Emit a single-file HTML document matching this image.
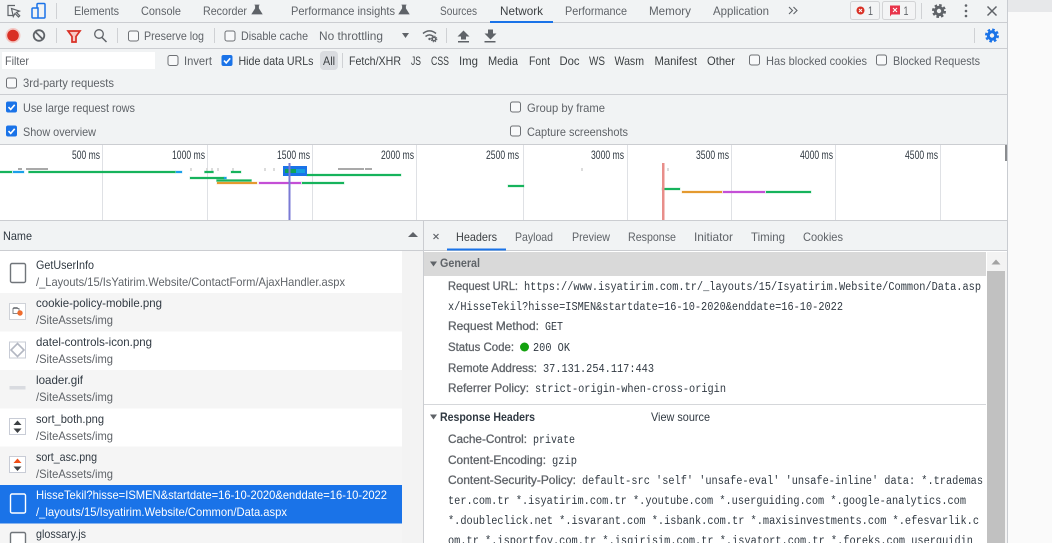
<!DOCTYPE html>
<html><head><meta charset="utf-8"><title>DevTools Network</title>
<style>
html,body{margin:0;padding:0;width:1052px;height:543px;overflow:hidden;background:#fafafa}
svg{display:block}
text{font-family:"Liberation Sans",sans-serif;font-size:12px;fill:#5f6368;white-space:pre}
.d{fill:#3c4043}
.n{fill:#303942}
.l{stroke:#5f6368;stroke-width:.3px}
.m{font-family:"Liberation Mono",monospace;font-size:11.5px;fill:#303942}
.b{font-weight:bold}
</style></head><body>
<svg width="1052" height="543" viewBox="0 0 1052 543" xmlns="http://www.w3.org/2000/svg">
<defs>
<g id="cb"><rect x=".5" y=".5" width="10" height="10" rx="2" fill="#f8f9fa" stroke="#6e7175"/></g>
<g id="cc"><rect x="0" y="0" width="11" height="11" rx="2" fill="#1a73e8"/><path d="M2.500 5.600l2.200 2.300 4-4.600" fill="none" stroke="#fff" stroke-width="1.600"/></g>
<g id="fl"><path d="M-1.500 -4.500h3v3l3.500 5.500h-10l3.500-5.500z M-2.500 -5h5" fill="#5f6368" stroke="#5f6368" stroke-width=".8"/></g>
<g id="gr"><circle r="3.700" fill="none" stroke="currentColor" stroke-width="3"/><circle r="6" fill="none" stroke="currentColor" stroke-width="2" stroke-dasharray="2.600 2.110"/></g>
</defs>

<rect width="1052" height="543" fill="#fafafa"/>
<rect x="1008" y="0" width="44" height="12" fill="#e7e8ea"/>
<rect x="0" y="0" width="1007" height="145" fill="#f1f3f4"/>
<rect x="1007" y="0" width="1" height="543" fill="#c9ccd1"/>

<!-- tab bar -->
<rect y="22" width="1007" height="1" fill="#cbcdd1"/>
<path d="M15 5.500H8v10h5M11.500 8.500l1.800 8 1.700-3 3.500 3.500 1.200-1.200-3.300-3.400 3-1.300z" fill="none" stroke="#5f6368" stroke-width="1.200"/>
<path d="M37 8V4.500a1 1 0 0 1 1-1h6a1 1 0 0 1 1 1v12.500a1 1 0 0 1-1 1h-11a1 1 0 0 1-1-1V9a1 1 0 0 1 1-1h5v10" fill="none" stroke="#1a73e8" stroke-width="1.500"/>
<rect x="56" y="3" width="1" height="16" fill="#cfd1d4"/>
<text x="74" y="15" textLength="45" lengthAdjust="spacingAndGlyphs">Elements</text>
<text x="141" y="15" textLength="40" lengthAdjust="spacingAndGlyphs">Console</text>
<text x="203" y="15" textLength="44" lengthAdjust="spacingAndGlyphs">Recorder</text>
<use href="#fl" x="257" y="10"/>
<text x="291" y="15" textLength="104" lengthAdjust="spacingAndGlyphs">Performance insights</text>
<use href="#fl" x="404" y="10"/>
<text x="440" y="15" textLength="37" lengthAdjust="spacingAndGlyphs">Sources</text>
<text class="d" x="500" y="15" textLength="43" lengthAdjust="spacingAndGlyphs">Network</text>
<rect x="490" y="21" width="63" height="2" fill="#1a73e8"/>
<text x="565" y="15" textLength="62" lengthAdjust="spacingAndGlyphs">Performance</text>
<text x="649" y="15" textLength="42" lengthAdjust="spacingAndGlyphs">Memory</text>
<text x="713" y="15" textLength="56" lengthAdjust="spacingAndGlyphs">Application</text>
<path d="M789 7l3.500 3.500-3.500 3.500M793.500 7l3.500 3.500-3.500 3.500" fill="none" stroke="#5f6368" stroke-width="1.100"/>

<rect x="850.500" y="1.500" width="29" height="18" rx="2" fill="#f3f4f5" stroke="#d3d4d6"/>
<circle cx="860.500" cy="10.500" r="4" fill="#d93025"/>
<path d="M859 9l3 3m0-3l-3 3" stroke="#fff" stroke-width="1"/>
<text x="868" y="15" textLength="5" lengthAdjust="spacingAndGlyphs">1</text>
<rect x="882.500" y="1.500" width="33" height="18" rx="2" fill="#f3f4f5" stroke="#d3d4d6"/>
<path d="M890 5.500h10v9h-8.500l-1.500 2z" fill="#e8334a"/>
<path d="M893 8l4 4m0-4l-4 4" stroke="#fff" stroke-width="1"/>
<text x="903.500" y="15" textLength="5" lengthAdjust="spacingAndGlyphs">1</text>
<rect x="921" y="3" width="1" height="16" fill="#cfd1d4"/>
<use href="#gr" x="939" y="11" color="#5f6368"/>
<g fill="#5f6368"><circle cx="966" cy="5.500" r="1.300"/><circle cx="966" cy="11" r="1.300"/><circle cx="966" cy="16" r="1.300"/></g>
<path d="M987.500 6.500l9 9m0-9l-9 9" stroke="#5f6368" stroke-width="1.500"/>

<!-- toolbar -->
<rect y="48" width="1007" height="1" fill="#cbcdd1"/>
<circle cx="13" cy="35.500" r="7.500" fill="#f3c6c2"/>
<circle cx="13" cy="35.500" r="5.800" fill="#d93025"/>
<circle cx="39" cy="35.500" r="5.300" fill="none" stroke="#5f6368" stroke-width="1.800"/>
<path d="M35.500 32l7 7" stroke="#5f6368" stroke-width="1.800"/>
<rect x="56" y="28" width="1" height="15" fill="#cfd1d4"/>
<path d="M68 31h12l-4 5.500v5.500h-4v-5.500z" fill="#f7c9c5" stroke="#d93025" stroke-width="1.700"/>
<circle cx="99" cy="34" r="4.300" fill="none" stroke="#5f6368" stroke-width="1.300"/>
<path d="M102 37.500l4.500 4.500" stroke="#5f6368" stroke-width="1.500"/>
<rect x="117" y="28" width="1" height="15" fill="#cfd1d4"/>
<use href="#cb" x="128" y="30.500"/>
<text x="144" y="40" textLength="60" lengthAdjust="spacingAndGlyphs">Preserve log</text>
<rect x="214" y="28" width="1" height="15" fill="#cfd1d4"/>
<use href="#cb" x="224.500" y="30.500"/>
<text x="241" y="40" textLength="67" lengthAdjust="spacingAndGlyphs">Disable cache</text>
<text x="319" y="40" textLength="64" lengthAdjust="spacingAndGlyphs">No throttling</text>
<path d="M402 33h7l-3.500 5z" fill="#5f6368"/>
<path d="M423 33.500c4-3.500 9-3.500 13 0M425.500 36.500c2.500-2 5.500-2 8 0" fill="none" stroke="#5f6368" stroke-width="1.500"/>
<circle cx="429.500" cy="39" r="1.200" fill="#5f6368"/>
<use href="#gr" x="0" y="0" transform="translate(434 39) scale(.48)" color="#5f6368"/>
<rect x="446" y="28" width="1" height="15" fill="#cfd1d4"/>
<path d="M461 36.500v3h5v-3h3.500l-6-6-6 6zM458 41h11v1.500h-11z" fill="#5f6368"/>
<path d="M488 29.500v4h-3.500l6 6 6-6h-3.500v-4zM484.500 41h11v1.500h-11z" fill="#5f6368"/>
<rect x="974" y="28" width="1" height="15" fill="#cfd1d4"/>
<use href="#gr" x="992" y="35.500" color="#1a73e8"/>

<!-- filter row -->
<rect x="2" y="52" width="153" height="17" fill="#fff"/>
<text x="5" y="65" textLength="24" lengthAdjust="spacingAndGlyphs" fill="#70757a">Filter</text>
<use href="#cb" x="167.500" y="55"/>
<text x="184" y="65" textLength="28" lengthAdjust="spacingAndGlyphs">Invert</text>
<use href="#cc" x="221.500" y="55"/>
<text class="d" x="238.500" y="65" textLength="75" lengthAdjust="spacingAndGlyphs">Hide data URLs</text>
<rect x="320" y="51" width="18" height="19" rx="4" fill="#dadce0"/>
<text class="d" x="323" y="65" textLength="12" lengthAdjust="spacingAndGlyphs">All</text>
<rect x="342" y="53" width="1" height="15" fill="#cfd1d4"/>
<text class="d" x="349" y="65" textLength="52" lengthAdjust="spacingAndGlyphs">Fetch/XHR</text>
<text class="d" x="411" y="65" textLength="10" lengthAdjust="spacingAndGlyphs">JS</text>
<text class="d" x="431" y="65" textLength="18" lengthAdjust="spacingAndGlyphs">CSS</text>
<text class="d" x="459" y="65" textLength="19" lengthAdjust="spacingAndGlyphs">Img</text>
<text class="d" x="488" y="65" textLength="30" lengthAdjust="spacingAndGlyphs">Media</text>
<text class="d" x="529" y="65" textLength="21" lengthAdjust="spacingAndGlyphs">Font</text>
<text class="d" x="559.500" y="65" textLength="20" lengthAdjust="spacingAndGlyphs">Doc</text>
<text class="d" x="589" y="65" textLength="16" lengthAdjust="spacingAndGlyphs">WS</text>
<text class="d" x="614.500" y="65" textLength="29.500" lengthAdjust="spacingAndGlyphs">Wasm</text>
<text class="d" x="654.500" y="65" textLength="42.500" lengthAdjust="spacingAndGlyphs">Manifest</text>
<text class="d" x="707" y="65" textLength="28" lengthAdjust="spacingAndGlyphs">Other</text>
<use href="#cb" x="749" y="54.500"/>
<text x="766" y="65" textLength="101" lengthAdjust="spacingAndGlyphs">Has blocked cookies</text>
<use href="#cb" x="876" y="54.500"/>
<text x="893" y="65" textLength="87" lengthAdjust="spacingAndGlyphs">Blocked Requests</text>
<use href="#cb" x="6" y="77.500"/>
<text x="23" y="87" textLength="91" lengthAdjust="spacingAndGlyphs">3rd-party requests</text>
<rect y="94" width="1007" height="1" fill="#cbcdd1"/>

<!-- settings -->
<use href="#cc" x="6" y="101.500"/>
<text x="23" y="112" textLength="112" lengthAdjust="spacingAndGlyphs">Use large request rows</text>
<use href="#cc" x="6" y="125.500"/>
<text x="23" y="136" textLength="73" lengthAdjust="spacingAndGlyphs">Show overview</text>
<use href="#cb" x="510" y="101.500"/>
<text x="527" y="112" textLength="78" lengthAdjust="spacingAndGlyphs">Group by frame</text>
<use href="#cb" x="510" y="125.500"/>
<text x="527" y="136" textLength="101" lengthAdjust="spacingAndGlyphs">Capture screenshots</text>
<rect y="144" width="1007" height="1" fill="#cbcdd1"/>

<!-- overview -->
<rect x="0" y="145" width="1007" height="75" fill="#fff"/>
<g fill="#dfe1e5">
<rect x="102" y="145" width="1" height="75"/><rect x="207" y="145" width="1" height="75"/><rect x="312" y="145" width="1" height="75"/><rect x="416" y="145" width="1" height="75"/><rect x="523" y="145" width="1" height="75"/><rect x="627" y="145" width="1" height="75"/><rect x="731" y="145" width="1" height="75"/><rect x="835" y="145" width="1" height="75"/><rect x="940" y="145" width="1" height="75"/>
</g>
<text class="n" x="72" y="159" textLength="28" lengthAdjust="spacingAndGlyphs">500 ms</text>
<text class="n" x="172" y="159" textLength="33" lengthAdjust="spacingAndGlyphs">1000 ms</text>
<text class="n" x="277" y="159" textLength="33" lengthAdjust="spacingAndGlyphs">1500 ms</text>
<text class="n" x="381" y="159" textLength="33" lengthAdjust="spacingAndGlyphs">2000 ms</text>
<text class="n" x="486" y="159" textLength="33" lengthAdjust="spacingAndGlyphs">2500 ms</text>
<text class="n" x="591" y="159" textLength="33" lengthAdjust="spacingAndGlyphs">3000 ms</text>
<text class="n" x="696" y="159" textLength="33" lengthAdjust="spacingAndGlyphs">3500 ms</text>
<text class="n" x="800" y="159" textLength="33" lengthAdjust="spacingAndGlyphs">4000 ms</text>
<text class="n" x="905" y="159" textLength="33" lengthAdjust="spacingAndGlyphs">4500 ms</text>
<rect x="1005" y="145" width="2" height="16" fill="#8a8c8f"/>
<g fill="#a9a9a9">
<rect x="18" y="168" width="4" height="2"/><rect x="26" y="168" width="22" height="2"/>
<rect x="338" y="168" width="26" height="2"/><rect x="365" y="168" width="7" height="2"/>
</g>
<g fill="#dcdcdc">
<rect x="190" y="168" width="2" height="3"/><rect x="206" y="168" width="2" height="3"/><rect x="211" y="168" width="2" height="3"/><rect x="217" y="168" width="2" height="3"/><rect x="232" y="168" width="2" height="3"/><rect x="264" y="168" width="2" height="3"/><rect x="273" y="168" width="2" height="3"/><rect x="581" y="168" width="2" height="3"/><rect x="667" y="168" width="2" height="3"/>
</g>
<g fill="#16b35c" stroke="#16b35c" stroke-opacity=".25">
<rect x="0" y="171" width="12" height="2"/><rect x="28.500" y="171" width="147" height="2"/>
<rect x="204.500" y="171" width="9" height="2"/><rect x="231" y="171" width="10" height="2"/>
<rect x="190" y="177" width="34" height="2"/><rect x="216.500" y="179.500" width="35" height="2"/>
<rect x="302" y="182" width="42" height="2"/><rect x="307" y="174" width="94" height="2"/>
<rect x="508" y="185" width="16" height="2"/><rect x="662" y="188" width="18" height="2"/><rect x="766" y="191" width="45" height="2"/>
</g>
<g fill="#1ba1e8" stroke="#1ba1e8" stroke-opacity=".25"><rect x="13" y="171" width="11" height="2"/><rect x="176" y="171" width="6" height="2"/><rect x="224" y="177" width="2.500" height="2"/></g>
<g fill="#e59a2f" stroke="#e59a2f" stroke-opacity=".25"><rect x="217" y="182" width="40" height="2"/><rect x="682" y="191" width="40" height="2"/></g>
<g fill="#c44fd6" stroke="#c44fd6" stroke-opacity=".25"><rect x="259" y="182" width="42" height="2"/><rect x="723" y="191" width="42" height="2"/></g>
<rect x="283" y="166" width="24" height="10" fill="#1a73e8"/>
<rect x="285" y="169" width="20" height="4" fill="#15a0e0"/>
<rect x="285" y="169" width="11" height="4" fill="#0ea35a"/>
<rect x="288.500" y="163" width="2" height="57" fill="#7a7ad4"/>
<rect x="662" y="163" width="2.500" height="57" fill="#e88e8a"/>

<!-- split lines -->
<rect y="220" width="1007" height="1" fill="#cbcdd1"/>
<rect x="0" y="221" width="1007" height="322" fill="#fff"/>
<rect x="0" y="221" width="423" height="29" fill="#f1f3f4"/>
<rect x="0" y="250" width="423" height="1" fill="#cbcdd1"/>
<text class="n" x="3" y="240" textLength="29" lengthAdjust="spacingAndGlyphs">Name</text>
<path d="M408 237l5-5 5 5z" fill="#5f6368"/>

<!-- list -->
<rect x="402" y="251" width="21" height="292" fill="#f3f3f3"/>
<rect x="423" y="221" width="1" height="322" fill="#cbcdd1"/>
<rect x="0" y="293" width="402" height="38.500" fill="#f5f5f5"/>
<rect x="0" y="370" width="402" height="38.500" fill="#f5f5f5"/>
<rect x="0" y="446.500" width="402" height="38.500" fill="#f5f5f5"/>
<rect x="0" y="485" width="402" height="38.500" fill="#1a73e8"/>
<rect x="0" y="523.500" width="402" height="20" fill="#f5f5f5"/>

<rect x="10.500" y="263.500" width="15" height="19" rx="1.500" fill="#fff" stroke="#70757a" stroke-width="1.400"/>
<text class="n" x="36" y="269" textLength="58" lengthAdjust="spacingAndGlyphs">GetUserInfo</text>
<text x="36" y="286" textLength="309" lengthAdjust="spacingAndGlyphs">/_Layouts/15/IsYatirim.Website/ContactForm/AjaxHandler.aspx</text>

<rect x="9.500" y="303.500" width="16" height="16" fill="#fff" stroke="#cfd2d8"/>
<path d="M13 308.500h6v5h-6zM13 308.500l1-1h3l1 1" fill="none" stroke="#5f6368" stroke-width=".8"/>
<circle cx="20" cy="313" r="2.700" fill="#ef6c2e"/>
<text class="n" x="36" y="307" textLength="126" lengthAdjust="spacingAndGlyphs">cookie-policy-mobile.png</text>
<text x="36" y="324" textLength="77" lengthAdjust="spacingAndGlyphs">/SiteAssets/img</text>

<rect x="9.500" y="342" width="16" height="16" fill="#fff" stroke="#c8ccd6"/>
<path d="M17.500 343.500l6.500 6.500-6.500 6.500-6.500-6.500z" fill="#fff" stroke="#b3b7c2" stroke-width="1.600"/>
<text class="n" x="36" y="346" textLength="116" lengthAdjust="spacingAndGlyphs">datel-controls-icon.png</text>
<text x="36" y="363" textLength="77" lengthAdjust="spacingAndGlyphs">/SiteAssets/img</text>

<rect x="9.500" y="386" width="16" height="3.500" fill="#d9dbe0"/>
<text class="n" x="36" y="384" textLength="47" lengthAdjust="spacingAndGlyphs">loader.gif</text>
<text x="36" y="401" textLength="77" lengthAdjust="spacingAndGlyphs">/SiteAssets/img</text>

<rect x="9.500" y="418.500" width="16" height="16" fill="#fff" stroke="#c8ccd6"/>
<path d="M17.500 420.500l4 4.500h-8z" fill="#3c4043"/><path d="M17.500 433l4-4.500h-8z" fill="#3c4043"/>
<text class="n" x="36" y="423" textLength="68" lengthAdjust="spacingAndGlyphs">sort_both.png</text>
<text x="36" y="440" textLength="77" lengthAdjust="spacingAndGlyphs">/SiteAssets/img</text>

<rect x="9.500" y="456.500" width="16" height="16" fill="#fff" stroke="#c8ccd6"/>
<path d="M17.500 458.500l4 4.500h-8z" fill="#f04e16"/><path d="M17.500 471l4-4.500h-8z" fill="#3c4043"/>
<text class="n" x="36" y="461" textLength="61" lengthAdjust="spacingAndGlyphs">sort_asc.png</text>
<text x="36" y="478" textLength="77" lengthAdjust="spacingAndGlyphs">/SiteAssets/img</text>

<rect x="10.500" y="494" width="15" height="19" rx="1.500" fill="#1a73e8" stroke="#fff" stroke-width="1.400"/>
<text style="fill:#fff" x="36" y="499" textLength="351" lengthAdjust="spacingAndGlyphs">HisseTekil?hisse=ISMEN&amp;startdate=16-10-2020&amp;enddate=16-10-2022</text>
<text style="fill:#fff" x="36" y="516" textLength="251" lengthAdjust="spacingAndGlyphs">/_layouts/15/Isyatirim.Website/Common/Data.aspx</text>

<rect x="10.500" y="532.500" width="15" height="19" rx="1.500" fill="#fff" stroke="#70757a" stroke-width="1.400"/>
<text class="n" x="36" y="538" textLength="50" lengthAdjust="spacingAndGlyphs">glossary.js</text>

<!-- details -->
<rect x="424" y="221" width="583" height="29" fill="#f1f3f4"/>
<rect x="424" y="250" width="583" height="1" fill="#cbcdd1"/>
<path d="M433.500 234l5 5m0-5l-5 5" stroke="#5f6368" stroke-width="1.200"/>
<text class="d" x="456" y="241" textLength="41" lengthAdjust="spacingAndGlyphs">Headers</text>
<rect x="447" y="248.500" width="59" height="2" fill="#1a73e8"/>
<text x="515" y="241" textLength="38" lengthAdjust="spacingAndGlyphs">Payload</text>
<text x="572" y="241" textLength="38" lengthAdjust="spacingAndGlyphs">Preview</text>
<text x="628" y="241" textLength="48" lengthAdjust="spacingAndGlyphs">Response</text>
<text x="694" y="241" textLength="39" lengthAdjust="spacingAndGlyphs">Initiator</text>
<text x="751" y="241" textLength="34" lengthAdjust="spacingAndGlyphs">Timing</text>
<text x="803" y="241" textLength="40" lengthAdjust="spacingAndGlyphs">Cookies</text>

<rect x="424" y="252" width="562" height="24" fill="#d9d9d9"/>
<path d="M430 261.500h7l-3.500 5z" fill="#5f6368"/>
<text class="b" x="440" y="267" textLength="40" lengthAdjust="spacingAndGlyphs">General</text>

<rect x="987" y="252" width="20" height="291" fill="#f3f3f3"/>
<rect x="987" y="271" width="18" height="272" fill="#c1c1c1"/>
<path d="M991.500 264.500l4.500-5 4.500 5z" fill="#a3a3a3"/>

<text class="l" x="448" y="290" textLength="70" lengthAdjust="spacingAndGlyphs">Request URL:</text>
<text class="m" x="524" y="290" textLength="457" lengthAdjust="spacingAndGlyphs">https://www.isyatirim.com.tr/_layouts/15/Isyatirim.Website/Common/Data.asp</text>
<text class="m" x="448" y="310" textLength="395" lengthAdjust="spacingAndGlyphs">x/HisseTekil?hisse=ISMEN&amp;startdate=16-10-2020&amp;enddate=16-10-2022</text>
<text class="l" x="448" y="330" textLength="91" lengthAdjust="spacingAndGlyphs">Request Method:</text>
<text class="m" x="545" y="330" textLength="18" lengthAdjust="spacingAndGlyphs">GET</text>
<text class="l" x="448" y="351" textLength="66" lengthAdjust="spacingAndGlyphs">Status Code:</text>
<circle cx="524.500" cy="347" r="4.500" fill="#13a10e"/>
<text class="m" x="533" y="351" textLength="37" lengthAdjust="spacingAndGlyphs">200 OK</text>
<text class="l" x="448" y="372" textLength="89" lengthAdjust="spacingAndGlyphs">Remote Address:</text>
<text class="m" x="543" y="372" textLength="111" lengthAdjust="spacingAndGlyphs">37.131.254.117:443</text>
<text class="l" x="448" y="392" textLength="81" lengthAdjust="spacingAndGlyphs">Referrer Policy:</text>
<text class="m" x="535" y="392" textLength="191" lengthAdjust="spacingAndGlyphs">strict-origin-when-cross-origin</text>
<rect x="424" y="404" width="562" height="1" fill="#d5d7da"/>

<path d="M430 414.500h7l-3.500 5z" fill="#5f6368"/>
<text class="b" style="fill:#303942" x="440" y="421" textLength="95" lengthAdjust="spacingAndGlyphs">Response Headers</text>
<text class="n" x="651" y="421" textLength="59" lengthAdjust="spacingAndGlyphs">View source</text>
<text class="l" x="448" y="443" textLength="79" lengthAdjust="spacingAndGlyphs">Cache-Control:</text>
<text class="m" x="533" y="443" textLength="42" lengthAdjust="spacingAndGlyphs">private</text>
<text class="l" x="448" y="464" textLength="98" lengthAdjust="spacingAndGlyphs">Content-Encoding:</text>
<text class="m" x="552" y="464" textLength="25" lengthAdjust="spacingAndGlyphs">gzip</text>
<text class="l" x="448" y="484" textLength="128" lengthAdjust="spacingAndGlyphs">Content-Security-Policy:</text>
<text class="m" x="582" y="484" textLength="401" lengthAdjust="spacingAndGlyphs">default-src 'self' 'unsafe-eval' 'unsafe-inline' data: *.trademas</text>
<text class="m" x="448" y="504" textLength="518" lengthAdjust="spacingAndGlyphs">ter.com.tr *.isyatirim.com.tr *.youtube.com *.userguiding.com *.google-analytics.com</text>
<text class="m" x="448" y="524" textLength="531" lengthAdjust="spacingAndGlyphs">*.doubleclick.net *.isvarant.com *.isbank.com.tr *.maxisinvestments.com *.efesvarlik.c</text>
<text class="m" x="448" y="544" textLength="525" lengthAdjust="spacingAndGlyphs">om.tr *.isportfoy.com.tr *.isgirisim.com.tr *.isyatort.com.tr *.foreks.com userguidin</text>
</svg>
</body></html>
